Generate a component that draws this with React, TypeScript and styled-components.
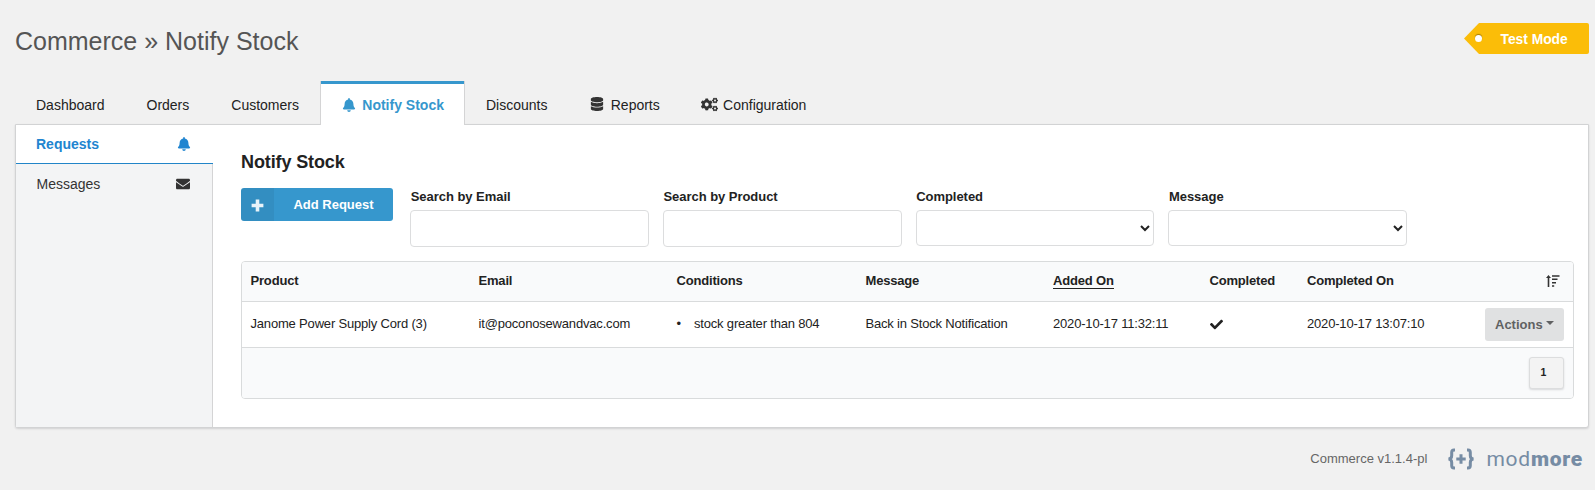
import React from 'react';
import styled, { createGlobalStyle } from 'styled-components';
import { FaBell, FaCheck, FaCogs, FaDatabase, FaEnvelope } from 'react-icons/fa';

const GlobalStyle = createGlobalStyle`
  *, *::before, *::after { box-sizing: border-box; }
  body {
    margin: 0;
    background: #f1f1f1;
    color: #222;
    font-family: "Liberation Sans", Arial, sans-serif;
    font-size: 13px;
  }
`;

const Page = styled.div`
  display: flex;
  flex-direction: column;
  height: 490px;
  padding: 0 6px 0 15px;
  overflow: hidden;
`;

const Header = styled.header`
  display: flex;
  justify-content: space-between;
  align-items: flex-start;
  height: 81px;
  padding-top: 23px;
`;

const Title = styled.h1`
  margin: 4px 0 0;
  font-size: 25px;
  line-height: 29px;
  font-weight: 400;
  color: #555;
`;

const TestTag = styled.div`
  display: flex;
  align-items: center;
  width: 125px;
  height: 31px;
  padding: 1px 0 0 11px;
  background: #fbbd08;
  color: #fff;
  font-size: 13.8px;
  font-weight: 700;
  border-radius: 0 2px 2px 0;
  clip-path: polygon(0 50%, 15px 0, 100% 0, 100% 100%, 15px 100%);
`;

const TagHole = styled.span`
  width: 7px;
  height: 7px;
  margin: 0 18.5px 1px 0;
  border-radius: 50%;
  background: #fff;
  box-shadow: 0 -1px 1px rgba(0, 0, 0, 0.35);
`;

const Tabs = styled.nav`
  display: flex;
  height: 43px;
  position: relative;
  z-index: 1;
`;

const Tab = styled.a<{ $active?: boolean }>`
  display: flex;
  align-items: center;
  height: ${p => (p.$active ? 44 : 43)}px;
  padding: 4px 20px 0;
  border: solid ${p => (p.$active ? '#d4d4d5' : 'transparent')};
  border-width: 0 1px;
  background: ${p => (p.$active ? '#fff' : 'transparent')};
  box-shadow: ${p => (p.$active ? 'inset 0 3px #3697cd' : 'none')};
  color: ${p => (p.$active ? '#3697cd' : '#222')};
  font-size: 14px;
  font-weight: ${p => (p.$active ? 700 : 400)};
  white-space: nowrap;
`;

const TabIcon = styled.span`
  display: flex;
  justify-content: center;
  width: 17px;
  margin-right: 4.3px;
  padding: 0 1px 1px 0;
  flex: none;
  svg { flex: none; }
`;

const Panel = styled.main`
  display: flex;
  height: 304px;
  border: 1px solid #d2d3d4;
  border-radius: 0 0 3px 3px;
  background: #fff;
  box-shadow: 0 1px 2px rgba(34, 36, 38, 0.15);
`;

const Sidebar = styled.aside`
  width: 197px;
  flex: none;
  background: linear-gradient(#d4d4d5, #d4d4d5) right / 1px 100% no-repeat #f3f4f5;
`;

const SideItem = styled.a<{ $active?: boolean }>`
  display: flex;
  align-items: center;
  justify-content: space-between;
  height: ${p => (p.$active ? 39 : 40)}px;
  padding: 0 ${p => (p.$active ? '22px 0 20px' : '23px 0 20.5px')};
  border-bottom: ${p => (p.$active ? '1px solid #2185c8' : 'none')};
  background: ${p => (p.$active ? '#fff' : 'transparent')};
  color: ${p => (p.$active ? '#2185d0' : '#333')};
  font-size: 14px;
  font-weight: ${p => (p.$active ? 700 : 400)};
`;

const Content = styled.section`
  flex: 1;
  padding: 27px 14px 0 28px;
`;

const Heading = styled.h2`
  margin: 0;
  height: 36px;
  font-size: 18px;
  line-height: 20px;
  color: #222;
  letter-spacing: -0.12px;
`;

const Toolbar = styled.div`
  display: flex;
  align-items: flex-start;
  height: 73px;
`;

const AddButton = styled.button`
  display: flex;
  align-items: stretch;
  width: 152px;
  height: 33px;
  margin-right: 17px;
  padding: 0;
  border: 0;
  border-radius: 3px;
  overflow: hidden;
  background: #3697cd;
  color: #fff;
  font: 700 13px "Liberation Sans", Arial, sans-serif;
`;

const AddIcon = styled.span`
  display: flex;
  align-items: center;
  justify-content: center;
  width: 33px;
  padding-top: 1px;
  background: rgba(0, 0, 0, 0.055);
  color: #e9f3f9;
`;

const AddLabel = styled.span`
  flex: 1;
  line-height: 33px;
  text-align: center;
`;

const Filters = styled.div`
  display: grid;
  grid-template-columns: repeat(4, 238.75px);
  column-gap: 14px;
`;

const Field = styled.label`
  display: flex;
  flex-direction: column;
  font-size: 13px;
  font-weight: 700;
  span {
    height: 22px;
    padding-left: 0.7px;
    line-height: 17px;
    letter-spacing: -0.04px;
  }
`;

const TextInput = styled.input`
  width: 100%;
  height: 37px;
  border: 1px solid #dcddde;
  border-radius: 4px;
  background: #fff;
  outline: none;
`;

const Select = styled.select`
  width: 100%;
  height: 36px;
  padding: 0;
  border: 1px solid #dcddde;
  border-radius: 4px;
  background: #fff;
  color: #222;
  outline: none;
`;

const TableFrame = styled.div`
  width: 1333px;
  border: 1px solid #d9dbdc;
  border-radius: 4px;
  overflow: hidden;
`;

const Row = styled.div<{ $head?: boolean }>`
  display: grid;
  grid-template-columns: 228px 198px 189px 187.5px 156.5px 97.5px 1fr;
  align-items: center;
  height: ${p => (p.$head ? 40 : 46)}px;
  padding: 0 9px 2px 8.5px;
  border-bottom: 1px solid #d9dbdc;
  background: ${p => (p.$head ? '#f9fafb' : '#fff')};
  font-weight: ${p => (p.$head ? 700 : 400)};
  letter-spacing: -0.18px;
  white-space: nowrap;
`;

const LastCell = styled.div`
  display: flex;
  align-items: center;
  justify-content: space-between;
  svg { margin-right: 4px; }
`;

const Sorted = styled.span`
  display: inline-block;
  height: 16px;
  margin-top: 1px;
  line-height: 15px;
  border-bottom: 1px solid #222;
`;

const Conditions = styled.ul`
  margin: 0;
  padding: 0;
  list-style: none;
  li { display: flex; align-items: center; }
  li::before { content: "•"; width: 17.5px; font-size: 13px; }
`;

const CheckIcon = styled(FaCheck)`
  display: block;
  margin-top: 1px;
`;

const ActionsButton = styled.button`
  display: flex;
  align-items: center;
  width: 79px;
  height: 33px;
  margin-top: 1px;
  padding: 0 0 0 10px;
  border: 0;
  border-radius: 3px;
  background: #e0e1e2;
  color: #606162;
  font: 700 13px "Liberation Sans", Arial, sans-serif;
  &::after {
    content: "";
    margin: -3px 0 0 3px;
    border: solid transparent;
    border-width: 4px 4px 0;
    border-top-color: #606162;
  }
`;

const TableFooter = styled.div`
  display: flex;
  justify-content: flex-end;
  height: 50px;
  padding: 9px 9px 0 0;
  background: #f9fafb;
`;

const PageNumber = styled.span`
  width: 35px;
  height: 32px;
  padding-left: 10.5px;
  border: 1px solid #dcddde;
  border-radius: 3px;
  background: #f3f3f3;
  box-shadow: 0 1px 2px rgba(34, 36, 38, 0.15);
  font-size: 10.5px;
  font-weight: 700;
  line-height: 29px;
`;

const Footer = styled.footer`
  display: flex;
  align-items: center;
  justify-content: flex-end;
  height: 61px;
  padding-right: 6px;
  color: #666;
`;

const Logo = styled.div`
  display: flex;
  align-items: center;
  margin: 1px 0 0 21px;
  color: #768ca4;
  font: 400 21px/24px Roboto, sans-serif;
  letter-spacing: 0.75px;
  svg { margin: 0 12px 0 0; }
  b { font-weight: 900; }
`;

const PlusIcon = () => (
  <svg width="13" height="13" viewBox="0 0 13 13" stroke="currentColor" strokeWidth="3.6">
    <path d="M.6 6.500h11.800M6.500.6v11.800" />
  </svg>
);

const SortIcon = () => (
  <svg width="14" height="14" viewBox="0 0 14 14" fill="#333">
    <path d="M2.500 1 5 4H3.300v9H1.700V4H0zM6 1.200h7.500v1.600H6zM6 4.600h5.500v1.500H6zM6 7.900h4v1.500H6zM6 11.200h2.200v1.500H6z" />
  </svg>
);

const LogoMark = () => (
  <svg width="26" height="22" viewBox="0 0 26 22" fill="none" stroke="currentColor" strokeWidth="3">
    <path d="M7 2H6C4.400 2 3.700 2.800 3.700 4.500V7.500C3.700 9.700 3 10.800 .5 11 3 11.200 3.700 12.300 3.700 14.500V17.500C3.700 19.200 4.400 20 6 20H7" />
    <path d="M19 2h1c1.600 0 2.300.8 2.300 2.500V7.500c0 2.200.7 3.300 3.200 3.500-2.500.2-3.200 1.300-3.200 3.500V17.500c0 1.700-.7 2.500-2.300 2.500h-1" />
    <path d="M8.300 11h9.400M13 6.300v9.400" />
  </svg>
);

export default function App() {
  return (
    <Page>
      <GlobalStyle />
      <Header>
        <Title>Commerce » Notify Stock</Title>
        <TestTag><TagHole />Test Mode</TestTag>
      </Header>
      <Tabs>
        <Tab>Dashboard</Tab>
        <Tab>Orders</Tab>
        <Tab>Customers</Tab>
        <Tab $active><TabIcon><FaBell size={14} /></TabIcon>Notify Stock</Tab>
        <Tab>Discounts</Tab>
        <Tab><TabIcon><FaDatabase size={14} color="#333" /></TabIcon>Reports</Tab>
        <Tab><TabIcon><FaCogs size={17} color="#333" /></TabIcon>Configuration</Tab>
      </Tabs>
      <Panel>
        <Sidebar>
          <SideItem $active>Requests<FaBell size={14} /></SideItem>
          <SideItem>Messages<FaEnvelope size={14} /></SideItem>
        </Sidebar>
        <Content>
          <Heading>Notify Stock</Heading>
          <Toolbar>
            <AddButton>
              <AddIcon><PlusIcon /></AddIcon>
              <AddLabel>Add Request</AddLabel>
            </AddButton>
            <Filters>
              <Field><span>Search by Email</span><TextInput /></Field>
              <Field><span>Search by Product</span><TextInput /></Field>
              <Field><span>Completed</span><Select /></Field>
              <Field><span>Message</span><Select /></Field>
            </Filters>
          </Toolbar>
          <TableFrame>
            <Row $head>
              <div>Product</div>
              <div>Email</div>
              <div>Conditions</div>
              <div>Message</div>
              <div><Sorted>Added On</Sorted></div>
              <div>Completed</div>
              <LastCell>Completed On<SortIcon /></LastCell>
            </Row>
            <Row>
              <div>Janome Power Supply Cord (3)</div>
              <div>it@poconosewandvac.com</div>
              <Conditions><li>stock greater than 804</li></Conditions>
              <div>Back in Stock Notification</div>
              <div>2020-10-17 11:32:11</div>
              <div><CheckIcon size={13} /></div>
              <LastCell>2020-10-17 13:07:10<ActionsButton>Actions</ActionsButton></LastCell>
            </Row>
            <TableFooter><PageNumber>1</PageNumber></TableFooter>
          </TableFrame>
        </Content>
      </Panel>
      <Footer>
        Commerce v1.1.4-pl
        <Logo><LogoMark /><span>mod<b>more</b></span></Logo>
      </Footer>
    </Page>
  );
}
